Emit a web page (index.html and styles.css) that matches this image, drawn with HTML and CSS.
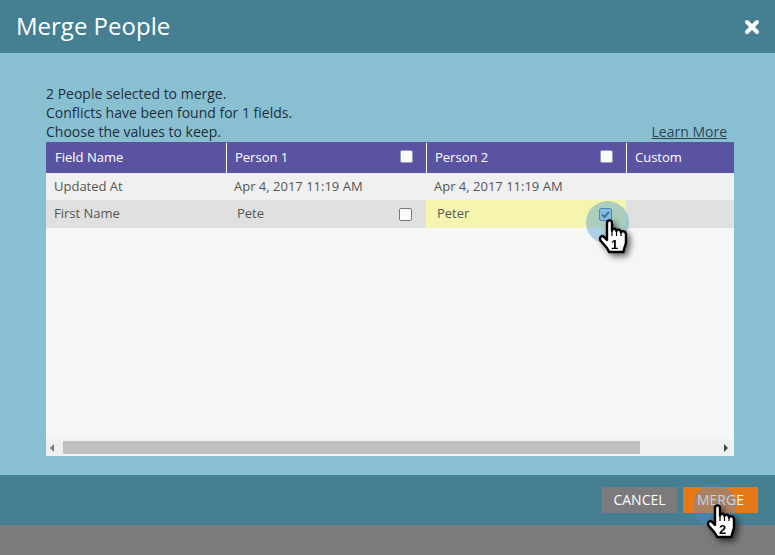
FILE: index.html
```html
<!DOCTYPE html>
<html lang="en">
<head>
  <meta charset="UTF-8">
  <title>Merge People</title>
  <link rel="stylesheet" href="styles.css">
</head>
<body>
  <div class="dialog">
    <div class="title-bar">
      <h1>Merge People</h1>
      <svg class="close" width="16" height="16" viewBox="0 0 16 16"><path d="M3 3 L13 13 M13 3 L3 13" stroke="#fff" stroke-width="4" stroke-linecap="round"/></svg>
    </div>

    <div class="content">
      <div class="intro">
        <p>2 People selected to merge.<br>Conflicts have been found for 1 fields.<br>Choose the values to keep.</p>
        <a href="#" class="learn">Learn More</a>
      </div>

      <div class="grid">
        <div class="row head">
          <div class="cell">Field Name</div>
          <div class="cell">Person 1 <span class="box"></span></div>
          <div class="cell">Person 2 <span class="box"></span></div>
          <div class="cell">Custom</div>
        </div>
        <div class="row light">
          <div class="cell">Updated At</div>
          <div class="cell">Apr 4, 2017 11:19 AM</div>
          <div class="cell">Apr 4, 2017 11:19 AM</div>
          <div class="cell"></div>
        </div>
        <div class="row dark">
          <div class="cell">First Name</div>
          <div class="cell val">Pete <span class="box line"></span></div>
          <div class="cell val picked">Peter
            <span class="box checked">
              <svg width="11" height="11" viewBox="0 0 11 11"><path d="M2 5.5 L4.5 8 L9 3" fill="none" stroke="#2f5f80" stroke-width="2"/></svg>
            </span>
          </div>
          <div class="cell"></div>
        </div>
        <div class="grid-fill"></div>
        <div class="scrollbar">
          <span class="arrow left"></span>
          <div class="track"><div class="thumb"></div></div>
          <span class="arrow right"></span>
        </div>
      </div>
    </div>

    <div class="footer">
      <div class="ring ring-two"></div>
      <button class="btn cancel">CANCEL</button>
      <button class="btn merge">MERGE</button>
    </div>
  </div>
  <div class="page-rest"></div>

  <!-- click markers -->
  <div class="ring ring-one"></div>
  <svg class="hand hand-one" width="30" height="35" viewBox="-1 -1 30 35">
    <path d="M8 3 C8 -0.5 13 -0.5 13 3 V10.5 C13.5 8 17 8 17.5 11 C18 9 21.5 9 22 12.5 C22.5 10.5 27 11 27 14.5 V22 C27 25 25 27 24.5 32 H10 C9 28 6 26 1.5 20.5 C0 17 3 15 5 17 L8 20 Z" fill="#fff" stroke="#000" stroke-width="2.4" stroke-linejoin="round"/>
    <path d="M13 10 V16 M17.5 11 V16 M22 12.5 V16" fill="none" stroke="#000" stroke-width="1.2"/>
    <text x="12" y="29" class="hand-num">1</text>
  </svg>
  <svg class="hand hand-two" width="30" height="35" viewBox="-1 -1 30 35">
    <path d="M8 3 C8 -0.5 13 -0.5 13 3 V10.5 C13.5 8 17 8 17.5 11 C18 9 21.5 9 22 12.5 C22.5 10.5 27 11 27 14.5 V22 C27 25 25 27 24.5 32 H10 C9 28 6 26 1.5 20.5 C0 17 3 15 5 17 L8 20 Z" fill="#fff" stroke="#000" stroke-width="2.4" stroke-linejoin="round"/>
    <path d="M13 10 V16 M17.5 11 V16 M22 12.5 V16" fill="none" stroke="#000" stroke-width="1.2"/>
    <text x="12" y="29" class="hand-num">2</text>
  </svg>
</body>
</html>
```

FILE: styles.css
```css
html, body { margin: 0; padding: 0; }
body { width: 775px; height: 555px; overflow: hidden; position: relative; font-family: "Open Sans", sans-serif; background: #7c7a7c; }

.dialog { display: flex; flex-direction: column; height: 525px; background: #88c0d2; }

.title-bar { height: 51px; background: #457f92; display: flex; align-items: center; justify-content: space-between; padding: 0 15px 2px 16px; }
.title-bar h1 { margin: 0; font-size: 24px; font-weight: 400; color: #fff; }
.close { display: block; margin-top: 2px; }

.content { flex: 1; padding: 31px 41px 19px 46px; display: flex; flex-direction: column; }
.intro { display: flex; justify-content: space-between; align-items: flex-end; padding-bottom: 1px; width: 681px; color: #1f2d3a; font-size: 14px; line-height: 19px; }
.intro p { margin: 0; }
.learn { color: #2f4358; }

.grid { width: 688px; flex: 1; display: flex; flex-direction: column; background: #f6f6f6; font-size: 13px; color: #555; }
.row { display: grid; grid-template-columns: 180px 200px 200px 108px; }
.cell { display: flex; align-items: center; justify-content: space-between; padding: 0 8px 1px; }

.head { height: 31px; background: #5a53a2; color: #fff; grid-template-columns: 181px 200px 200px 107px; }
.head .cell { padding: 0 13px 3px 8px; margin-top: 1px; border-right: 1px solid #fff; }
.head .cell:first-child { padding-left: 9px; }
.head .cell:last-child { border-right: none; }
.light { height: 27px; background: #f0f0f0; }
.dark { height: 28px; background: #e0e0e0; }
.dark .cell { padding-bottom: 3px; }
.val { padding-left: 11px; padding-right: 14px; }
.picked { background: #f5f5b0; }
.dark .box { margin-top: 4px; }

.box { width: 11px; height: 11px; background: #fbfbfb; border: 1px solid #8f9db0; border-radius: 2px; display: block; }
.box.line { border-color: #777; }
.box.checked { background: #b9d2ea; border-color: #4a7fa8; }
.box svg { display: block; }

.grid-fill { flex: 1; }
.scrollbar { height: 17px; background: #f0f0f0; display: flex; align-items: center; }
.track { flex: 1; height: 13px; margin: 0 17px 0 0; }
.thumb { width: 577px; height: 13px; background: #bfbfbf; }
.arrow { width: 0; height: 0; border-top: 4px solid transparent; border-bottom: 4px solid transparent; }
.arrow.left { border-right: 4px solid #777; margin: 0 9px 0 4px; }
.arrow.right { border-left: 4px solid #444; margin-right: 6px; margin-left: -11px; }

.footer { height: 50px; background: #457f92; display: flex; justify-content: flex-end; align-items: center; gap: 6px; padding: 0 17px 0 0; position: relative; overflow: hidden; }
.btn { width: 75px; height: 26px; border: none; color: #fff; font-family: "Open Sans", sans-serif; font-size: 14px; padding: 0 0 2px; }
.cancel { background: #7c7a7c; }
.merge { background: #e77817; }

.page-rest { height: 30px; background: #7c7a7c; }

.ring { position: absolute; width: 43px; height: 43px; border-radius: 50%; z-index: 1; }
.ring-one { left: 586px; top: 201px; background: rgba(70, 155, 205, 0.42); }
.ring-two { left: 693px; top: 9px; background: rgba(75, 145, 215, 0.38); }
.hand { position: absolute; z-index: 2; filter: drop-shadow(3px 3px 3px rgba(0, 0, 0, 0.6)); }
.hand-one { left: 598px; top: 219px; }
.hand-two { left: 706px; top: 504px; }
.hand-num { font-family: "Liberation Sans", sans-serif; font-size: 13px; font-weight: 700; fill: #000; }
```
